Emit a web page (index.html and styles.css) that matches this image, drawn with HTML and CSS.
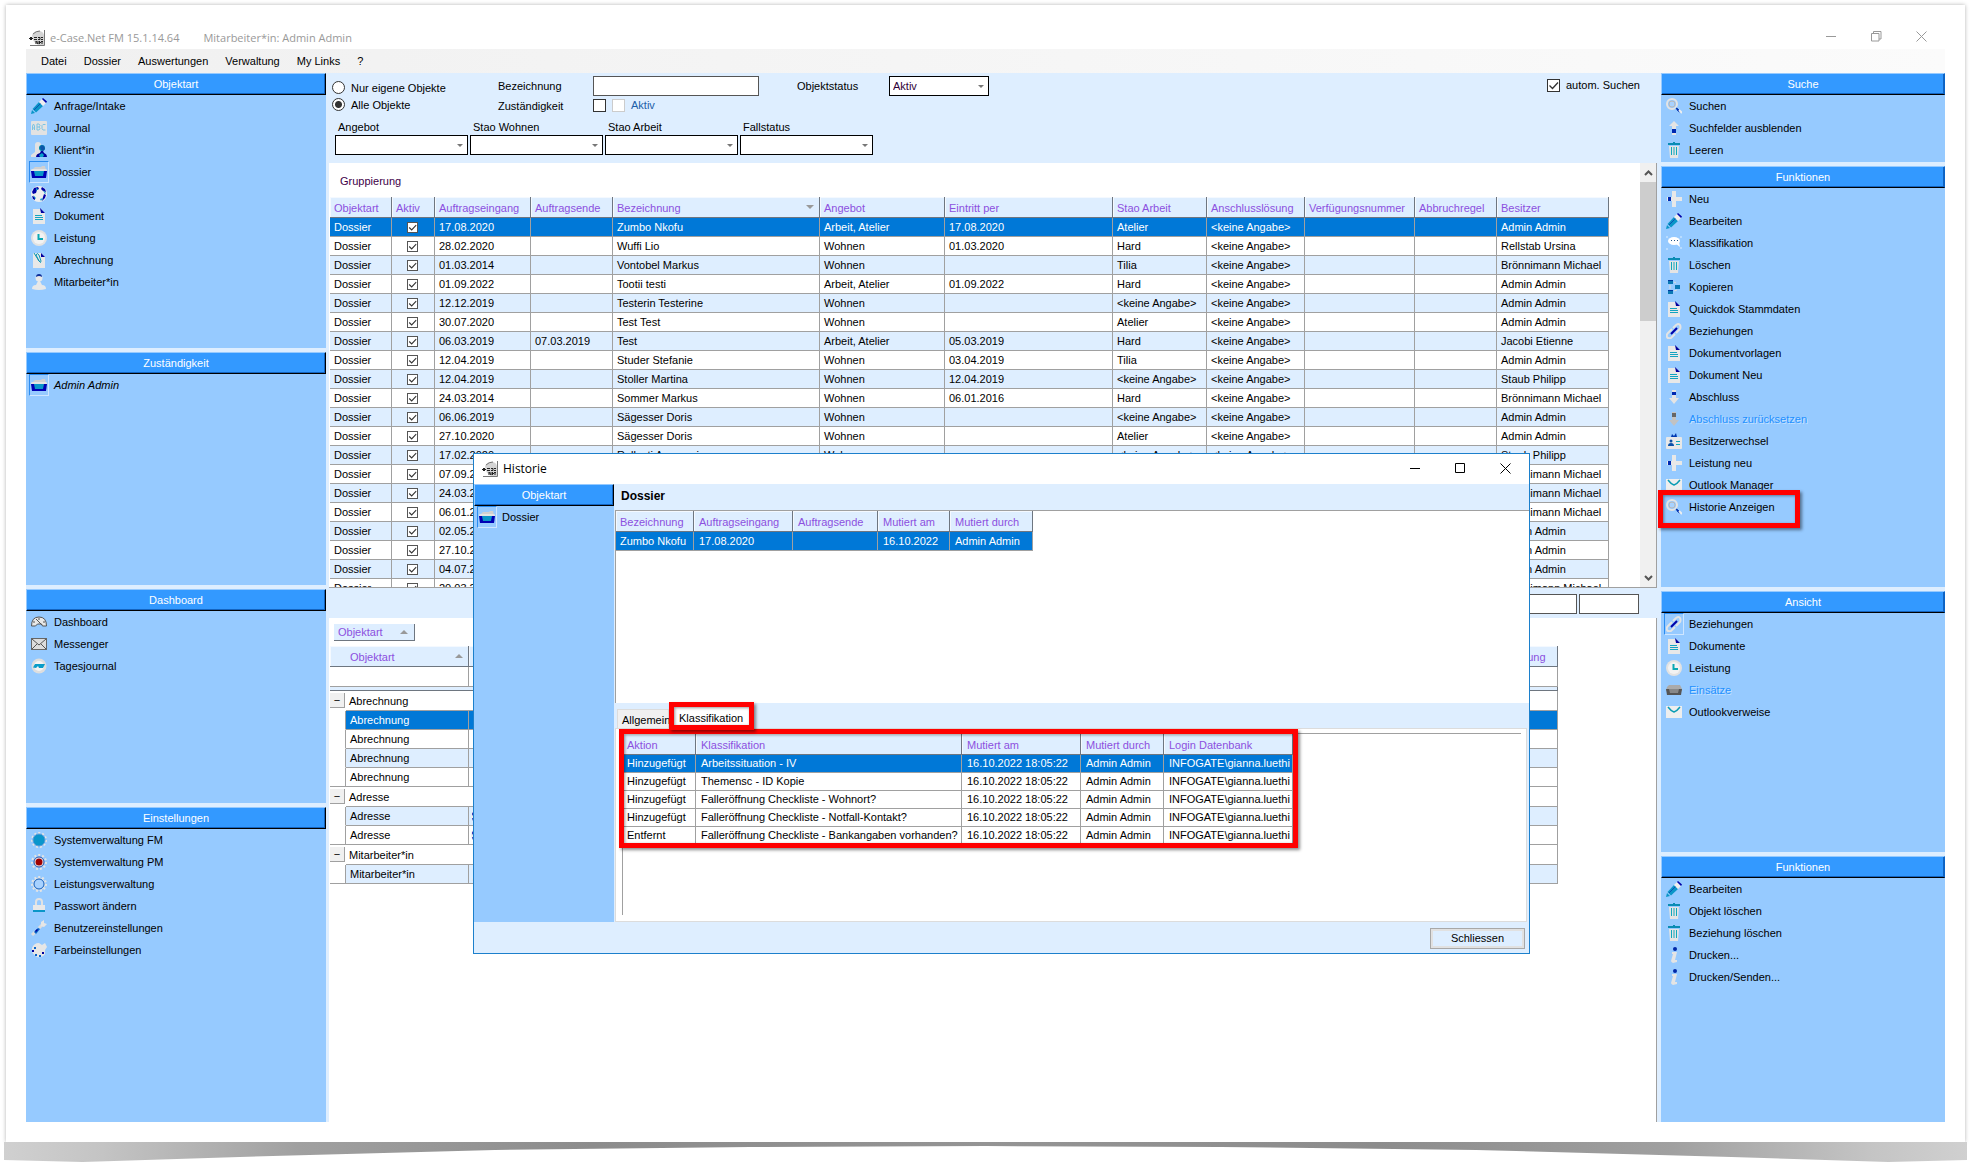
FILE: index.html
```html
<!DOCTYPE html>
<html lang="de">
<head>
<meta charset="utf-8">
<title>e-Case.Net FM</title>
<link rel="stylesheet" href="styles.css">
</head>
<body>
<svg class="sprite" aria-hidden="true">
  <symbol id="logo" viewBox="0 0 16 16"><path d="M3 5Q6 0 11 1q4 1 4 5v9H9Q3 12 3 5z" fill="#d4d4d4"/><path d="M4 4q3-3 7-3" stroke="#777" fill="none"/><path d="M15.500 0v15.500H1" stroke="#777" fill="none"/><path d="M0 8.500h4M1 7.500h2M1 9.500h2M5 7.500h3M5 9.500h3M9 7.500h2v2H9M12 7.500h2M12 9.500h2" stroke="#222" fill="none"/><path d="M7 14v-3l2 3v-3M10.500 11v3M10 12.500h2M13 11v3M12 11.500h2" stroke="#222" fill="none"/></symbol>
  <symbol id="pencil" viewBox="0 0 16 16"><path d="M0 16l1-4 3 3z" fill="#0a96c8"/><path d="M1.500 11L8 4l4 4-7 6.500z" fill="#0a96c8"/><path d="M3 12l7-7" stroke="#0d4fb4"/><path d="M8 4l3-3 4 4-3 3z" fill="#eee"/><path d="M11 1l1-1 4 3.500L15 5z" fill="#0000a8"/></symbol>
  <symbol id="abc" viewBox="0 0 16 16"><rect y="1" width="16" height="14" rx="1" fill="#e2e2e2"/><path d="M1.500 10V6l1-2 1 2v4M1.500 8h2M6 4v6h2l1-1.500L8 7l1-1.500L8 4zM6 7h2M14.500 4.500H12l-1 1v3l1 1.500h2.500" fill="none" stroke="#7cc4e2"/></symbol>
  <symbol id="clients" viewBox="0 0 16 16"><path d="M4 3q0-3 3-3t3 3-1 4v3l3 2v3H0v-2l4-3z" fill="#e2e2e2"/><circle cx="11" cy="6" r="3" fill="#08a"/><path d="M9 5q1-3 4-1l1 3-2 2-2-1z" fill="#0d55aa"/><path d="M5 15q0-3 4-4l1-2h2l1 2q3 1 3 4z" fill="#00009c"/><path d="M8 13l3-2 2 2-1 2H9z" fill="#08a0c8"/></symbol>
  <symbol id="folder" viewBox="0 0 16 16"><path d="M2 5l2-2h6l1-1h3l1 4z" fill="#d0d0d0"/><path d="M0 6q0-1 2-1h12q2 0 2 1v1H0z" fill="#e4e4e4"/><path d="M0 7h16l-1 7H1z" fill="#0000b4"/><path d="M3 7h10l-1 5H4z" fill="#0a96c8"/></symbol>
  <symbol id="folder-off" viewBox="0 0 16 16"><path d="M1 5l2-2h11l2 4v2H0z" fill="#aaa"/><path d="M0 7h16l-1 6H1z" fill="#555"/><path d="M3 7h10l-1 4H4z" fill="#888"/></symbol>
  <symbol id="globe" viewBox="0 0 16 16"><circle cx="8" cy="8" r="8" fill="#eee"/><path d="M3 2l4-1 1 2-2 1-1 3-3 1-1-2zM11 1l3 2 1 3-3-1-2-2zM1 10l3 1v3l-2-1zM13 8l2 1-1 3-3 3 1-4z" fill="#0000a8"/><path d="M5 2l2 1-2 2zM12 4l3 3-1 1zM2 9l3 3-1 1zM9 13l3-1-2 3z" fill="#0aa0c8"/></symbol>
  <symbol id="doc" viewBox="0 0 16 16"><path d="M2 1h8l4 4v11H2z" fill="#e8e8e8"/><path d="M9 0l5 5h-4z" fill="#0000a0"/><path d="M4 7.500h7M4 9.500h8M4 11.500h8" stroke="#12a4c0"/></symbol>
  <symbol id="clock" viewBox="0 0 16 16"><circle cx="8" cy="8" r="8" fill="#e2e2e2"/><circle cx="8" cy="8" r="6" fill="#f2f2f2"/><path d="M7.500 4v5H12" stroke="#0aa8b4" stroke-width="2" fill="none"/></symbol>
  <symbol id="clip" viewBox="0 0 16 16"><path d="M2 1h8l4 4v11H2z" fill="#e8e8e8"/><path d="M10 1l4 4h-4z" fill="#0000a0"/><path d="M3 1l5 8q2 3 2 0L8 3Q6 0 5 3l3 6" stroke="#0a96b4" fill="none"/></symbol>
  <symbol id="person" viewBox="0 0 16 16"><circle cx="8" cy="4" r="3.500" fill="#e8e8e8"/><path d="M5 3q0-3 3-3t3 3q-3-2-6 0z" fill="#0b2f9c"/><path d="M1 15q0-4 4-4l2-4h2l2 4q4 0 4 4-7 2-14 0z" fill="#e8e8e8"/></symbol>
  <symbol id="gauge" viewBox="0 0 16 16"><path d="M.500 12q0-9 7.500-9t7.500 9h-4l-1-2h-4l-2 2z" fill="#e8e8e8" stroke="#555"/><path d="M5 5l6 6M2 8h2M12 8h2M8 4v2" stroke="#555"/></symbol>
  <symbol id="letter" viewBox="0 0 16 16"><rect x=".5" y="2.500" width="15" height="11" fill="#ddd" stroke="#666"/><path d="M1 3l7 6 7-6M1 13l5-5M15 13l-5-5" stroke="#555" fill="none"/></symbol>
  <symbol id="ndp" viewBox="0 0 16 16"><circle cx="8" cy="8" r="7.500" fill="#dedede"/><circle cx="8" cy="8" r="5" fill="#f4f4f4"/><path d="M2 9.500L4 6h10l-2 4H8L7 8l-2 2z" fill="#0a9cc8"/></symbol>
  <symbol id="gear-blue" viewBox="0 0 16 16"><circle cx="8" cy="8" r="7" fill="none" stroke="#e4e4e4" stroke-width="2" stroke-dasharray="2 2"/><circle cx="8" cy="8" r="6" fill="#0a96cc" stroke="#5a9ad8"/></symbol>
  <symbol id="gear-red" viewBox="0 0 16 16"><circle cx="8" cy="8" r="7" fill="none" stroke="#e4e4e4" stroke-width="2" stroke-dasharray="2 2"/><circle cx="8" cy="8" r="5" fill="#eee" stroke="#2c4fa0"/><circle cx="8" cy="8" r="3.500" fill="#a00000"/></symbol>
  <symbol id="gear" viewBox="0 0 16 16"><circle cx="8" cy="8" r="7" fill="none" stroke="#e4e4e4" stroke-width="2" stroke-dasharray="2 2"/><circle cx="8" cy="8" r="6" fill="none" stroke="#e4e4e4"/><circle cx="8" cy="8" r="5" fill="#a8d2ff" stroke="#1a60b8"/></symbol>
  <symbol id="lock" viewBox="0 0 16 16"><path d="M5 8V4q0-3 3-3t3 3v4" fill="none" stroke="#e2e2e2" stroke-width="2"/><path d="M2 7h12v7H2z" fill="#e8e8e8"/><path d="M2 12h12v2H2z" fill="#0a96c8"/></symbol>
  <symbol id="wrench" viewBox="0 0 16 16"><path d="M1 15l3-3M8 8l3-3" stroke="#ddd" stroke-width="3"/><path d="M10 6V2l3-2v3l3 1-3 3z" fill="#e6e6e6"/><path d="M3 12l4-4 2 1-4 5z" fill="#0a64c8"/><path d="M4 11l2-2 1 1-2 2z" fill="#00009c"/></symbol>
  <symbol id="palette" viewBox="0 0 16 16"><path d="M8 1l3 2 3-2 2 4-2 3v4q-3 4-8 3-6-3-5-9 2-5 7-5z" fill="#e6e6e6"/><path d="M3 5h2v2H3zM4 12h2v2H4zM8 13h2v2H8z" fill="#0a64c8"/><path d="M1 8h2v2H1zM11 10h2v2h-2z" fill="#00009c"/></symbol>
  <symbol id="search" viewBox="0 0 16 16"><circle cx="6" cy="6" r="5" fill="none" stroke="#e4e4e4" stroke-width="2"/><circle cx="6" cy="6" r="3" fill="#a8d2ff" stroke="#b8b8b8"/><path d="M10 10l2 1 2 3-2-1z" fill="#0000a8" stroke="#0038b0"/><path d="M13 12l3 3" stroke="#eee" stroke-width="2"/></symbol>
  <symbol id="up" viewBox="0 0 16 16"><path d="M8 1l5 5h-3v9H6V6H3z" fill="#e4e4e4"/><path d="M6 9h4v4H6z" fill="#0028b0"/></symbol>
  <symbol id="down" viewBox="0 0 16 16"><path d="M6 1h4v8h3l-5 6-5-6h3z" fill="#e4e4e4"/><path d="M6 3h4v3H6z" fill="#0028b0"/></symbol>
  <symbol id="down-off" viewBox="0 0 16 16"><path d="M6 1h4v8h3l-5 6-5-6h3z" fill="#c2c2c2"/><path d="M6 2h4v4H6z" fill="#666"/></symbol>
  <symbol id="trash" viewBox="0 0 16 16"><path d="M3 4h10l-1 12H4z" fill="#e4e4e4"/><path d="M2 1h5V0h2v1h5v2H2z" fill="#0a8cb4"/><path d="M5.500 5v8M8 5v8M10.500 5v8" stroke="#10a8bc"/></symbol>
  <symbol id="plus" viewBox="0 0 16 16"><path d="M6 0h4v6h6v4h-6v6H6v-6H1V6h5z" fill="#e8e8e8"/><path d="M2 6h3v4H2z" fill="#0028b0"/></symbol>
  <symbol id="chat" viewBox="0 0 16 16"><path d="M1 1v2M1 13v2M15 1v2M15 12v2" stroke="#dceeff"/><ellipse cx="8" cy="6" rx="6" ry="4" fill="#fff"/><path d="M9 8l5 4-1-5z" fill="#fff"/><path d="M5 5.500h1M8 5.500h1M11 5.500h1" stroke="#258" stroke-width="1"/></symbol>
  <symbol id="copy" viewBox="0 0 16 16"><path d="M2 1h5v4H2zM9 6h5v4H9zM2 11h5v4H2z" fill="#0a78b4"/><path d="M2 1h5v1H2zM2 11h5v1H2z" fill="#0038a0"/><path d="M8 3l2 1M8 12l3-1M4 6v4" stroke="#ddd"/></symbol>
  <symbol id="link" viewBox="0 0 16 16"><path d="M7 5l3-3q3-2 4 0t0 4l-4 4M9 11l-4 4q-3 1-4-1t1-4l4-4" stroke="#e4e4e4" stroke-width="2" fill="none"/><path d="M5 11l6-6" stroke="#0000a8" stroke-width="2"/></symbol>
  <symbol id="idcard" viewBox="0 0 16 16"><rect y="4" width="16" height="12" rx="1" fill="#e8e8e8"/><path d="M5 4l1-3 2 2 2-3 1 4z" fill="#0038b0"/><circle cx="5" cy="8" r="1.500" fill="#0a50a8"/><path d="M2 13q0-3 3-3t3 3z" fill="#0a50a8"/><path d="M10 8.500h4M10 11.500h4" stroke="#10a8bc"/></symbol>
  <symbol id="mail" viewBox="0 0 16 16"><rect y="2" width="16" height="12" fill="#eee"/><path d="M2 3q3 4 6 5 3-1 6-5" stroke="#0a9cb4" fill="none" stroke-width="1.500"/></symbol>
  <symbol id="info" viewBox="0 0 16 16"><circle cx="9" cy="2" r="2" fill="#0028a8"/><path d="M6 5h5l-2 8h2v2l-4 1q-2-1-2-2l2-7H6z" fill="#e4e4e4"/></symbol>
</svg>

<div class="paper">
<div class="app">
  <header class="titlebar">
    <svg class="logo"><use href="#logo"/></svg>
    <span>e-Case.Net FM 15.1.14.64</span><span class="user">Mitarbeiter*in: Admin Admin</span>
    <div class="winbtns muted">
      <button aria-label="Minimieren"><svg viewBox="0 0 11 11"><path d="M0 5.500h10"/></svg></button>
      <button aria-label="Wiederherstellen"><svg viewBox="0 0 11 11"><path d="M.500 2.500h7.500v7.500H.500zM2.500 2.500v-2h7.500v7.500H8"/></svg></button>
      <button aria-label="Schliessen"><svg viewBox="0 0 11 11"><path d="M.500.500l10 10M10.500.500l-10 10"/></svg></button>
    </div>
  </header>
  <nav class="menubar">
    <button>Datei</button><button>Dossier</button><button>Auswertungen</button><button>Verwaltung</button><button>My Links</button><button>?</button>
  </nav>

  <div class="workspace">
    <aside class="side side-left">
      <section class="panel"><h2>Objektart</h2>
        <ul>
          <li><button><svg class="icon"><use href="#pencil"/></svg>Anfrage/Intake</button></li>
          <li><button><svg class="icon"><use href="#abc"/></svg>Journal</button></li>
          <li><button><svg class="icon"><use href="#clients"/></svg>Klient*in</button></li>
          <li><button class="active"><svg class="icon"><use href="#folder"/></svg>Dossier</button></li>
          <li><button><svg class="icon"><use href="#globe"/></svg>Adresse</button></li>
          <li><button><svg class="icon"><use href="#doc"/></svg>Dokument</button></li>
          <li><button><svg class="icon"><use href="#clock"/></svg>Leistung</button></li>
          <li><button><svg class="icon"><use href="#clip"/></svg>Abrechnung</button></li>
          <li><button><svg class="icon"><use href="#person"/></svg>Mitarbeiter*in</button></li>
        </ul>
      </section>
      <section class="panel"><h2>Zuständigkeit</h2>
        <ul><li><button class="active italic"><svg class="icon"><use href="#folder"/></svg>Admin Admin</button></li></ul>
      </section>
      <section class="panel"><h2>Dashboard</h2>
        <ul>
          <li><button><svg class="icon"><use href="#gauge"/></svg>Dashboard</button></li>
          <li><button><svg class="icon"><use href="#letter"/></svg>Messenger</button></li>
          <li><button><svg class="icon"><use href="#ndp"/></svg>Tagesjournal</button></li>
        </ul>
      </section>
      <section class="panel"><h2>Einstellungen</h2>
        <ul>
          <li><button><svg class="icon"><use href="#gear-blue"/></svg>Systemverwaltung FM</button></li>
          <li><button><svg class="icon"><use href="#gear-red"/></svg>Systemverwaltung PM</button></li>
          <li><button><svg class="icon"><use href="#gear"/></svg>Leistungsverwaltung</button></li>
          <li><button><svg class="icon"><use href="#lock"/></svg>Passwort ändern</button></li>
          <li><button><svg class="icon"><use href="#wrench"/></svg>Benutzereinstellungen</button></li>
          <li><button><svg class="icon"><use href="#palette"/></svg>Farbeinstellungen</button></li>
        </ul>
      </section>
    </aside>

    <main class="main">
      <form class="filters">
        <div class="filter-top">
          <div class="scope">
            <label><input type="radio" name="scope">Nur eigene Objekte</label>
            <label><input type="radio" name="scope" checked>Alle Objekte</label>
          </div>
          <div class="fields">
            <label for="bez">Bezeichnung</label><input type="text" id="bez">
            <label for="zust">Zuständigkeit</label>
            <span class="checks"><input type="checkbox" id="zust"><input type="checkbox" id="akt" disabled><label class="dim" for="akt">Aktiv</label></span>
          </div>
          <div class="status"><label for="stat">Objektstatus</label><select id="stat"><option>Aktiv</option></select></div>
          <label class="auto"><input type="checkbox" checked>autom. Suchen</label>
        </div>
        <div class="filter-row">
          <label>Angebot<select><option></option></select></label>
          <label>Stao Wohnen<select><option></option></select></label>
          <label>Stao Arbeit<select><option></option></select></label>
          <label>Fallstatus<select><option></option></select></label>
        </div>
      </form>

      <section class="list">
        <div class="list-body">
          <p class="grouping">Gruppierung</p>
          <table class="grid objects">
            <colgroup><col class="c62"><col class="c43"><col class="c96"><col class="c82"><col class="c207"><col class="c125"><col class="c168"><col class="c94"><col class="c98"><col class="c110"><col class="c82"><col class="c112"></colgroup>
            <thead><tr><th>Objektart</th><th>Aktiv</th><th>Auftragseingang</th><th>Auftragsende</th><th class="sort-down">Bezeichnung</th><th>Angebot</th><th>Eintritt per</th><th>Stao Arbeit</th><th>Anschlusslösung</th><th>Verfügungsnummer</th><th>Abbruchregel</th><th>Besitzer</th></tr></thead>
            <tbody>
              <tr class="selected"><td>Dossier</td><td><input type="checkbox" aria-label="Aktiv" checked></td><td>17.08.2020</td><td></td><td>Zumbo Nkofu</td><td>Arbeit, Atelier</td><td>17.08.2020</td><td>Atelier</td><td>&lt;keine Angabe&gt;</td><td></td><td></td><td>Admin Admin</td></tr>
              <tr><td>Dossier</td><td><input type="checkbox" aria-label="Aktiv" checked></td><td>28.02.2020</td><td></td><td>Wuffi Lio</td><td>Wohnen</td><td>01.03.2020</td><td>Hard</td><td>&lt;keine Angabe&gt;</td><td></td><td></td><td>Rellstab Ursina</td></tr>
              <tr><td>Dossier</td><td><input type="checkbox" aria-label="Aktiv" checked></td><td>01.03.2014</td><td></td><td>Vontobel Markus</td><td>Wohnen</td><td></td><td>Tilia</td><td>&lt;keine Angabe&gt;</td><td></td><td></td><td>Brönnimann Michael</td></tr>
              <tr><td>Dossier</td><td><input type="checkbox" aria-label="Aktiv" checked></td><td>01.09.2022</td><td></td><td>Tootii testi</td><td>Arbeit, Atelier</td><td>01.09.2022</td><td>Hard</td><td>&lt;keine Angabe&gt;</td><td></td><td></td><td>Admin Admin</td></tr>
              <tr><td>Dossier</td><td><input type="checkbox" aria-label="Aktiv" checked></td><td>12.12.2019</td><td></td><td>Testerin Testerine</td><td>Wohnen</td><td></td><td>&lt;keine Angabe&gt;</td><td>&lt;keine Angabe&gt;</td><td></td><td></td><td>Admin Admin</td></tr>
              <tr><td>Dossier</td><td><input type="checkbox" aria-label="Aktiv" checked></td><td>30.07.2020</td><td></td><td>Test Test</td><td>Wohnen</td><td></td><td>Atelier</td><td>&lt;keine Angabe&gt;</td><td></td><td></td><td>Admin Admin</td></tr>
              <tr><td>Dossier</td><td><input type="checkbox" aria-label="Aktiv" checked></td><td>06.03.2019</td><td>07.03.2019</td><td>Test</td><td>Arbeit, Atelier</td><td>05.03.2019</td><td>Hard</td><td>&lt;keine Angabe&gt;</td><td></td><td></td><td>Jacobi Etienne</td></tr>
              <tr><td>Dossier</td><td><input type="checkbox" aria-label="Aktiv" checked></td><td>12.04.2019</td><td></td><td>Studer Stefanie</td><td>Wohnen</td><td>03.04.2019</td><td>Tilia</td><td>&lt;keine Angabe&gt;</td><td></td><td></td><td>Admin Admin</td></tr>
              <tr><td>Dossier</td><td><input type="checkbox" aria-label="Aktiv" checked></td><td>12.04.2019</td><td></td><td>Stoller Martina</td><td>Wohnen</td><td>12.04.2019</td><td>&lt;keine Angabe&gt;</td><td>&lt;keine Angabe&gt;</td><td></td><td></td><td>Staub Philipp</td></tr>
              <tr><td>Dossier</td><td><input type="checkbox" aria-label="Aktiv" checked></td><td>24.03.2014</td><td></td><td>Sommer Markus</td><td>Wohnen</td><td>06.01.2016</td><td>Hard</td><td>&lt;keine Angabe&gt;</td><td></td><td></td><td>Brönnimann Michael</td></tr>
              <tr><td>Dossier</td><td><input type="checkbox" aria-label="Aktiv" checked></td><td>06.06.2019</td><td></td><td>Sägesser Doris</td><td>Wohnen</td><td></td><td>&lt;keine Angabe&gt;</td><td>&lt;keine Angabe&gt;</td><td></td><td></td><td>Admin Admin</td></tr>
              <tr><td>Dossier</td><td><input type="checkbox" aria-label="Aktiv" checked></td><td>27.10.2020</td><td></td><td>Sägesser Doris</td><td>Wohnen</td><td></td><td>Atelier</td><td>&lt;keine Angabe&gt;</td><td></td><td></td><td>Admin Admin</td></tr>
              <tr><td>Dossier</td><td><input type="checkbox" aria-label="Aktiv" checked></td><td>17.02.2020</td><td></td><td>Rellseti Annerosi</td><td>Wohnen</td><td></td><td>&lt;keine Angabe&gt;</td><td>&lt;keine Angabe&gt;</td><td></td><td></td><td>Staub Philipp</td></tr>
              <tr><td>Dossier</td><td><input type="checkbox" aria-label="Aktiv" checked></td><td>07.09.2020</td><td></td><td></td><td></td><td></td><td></td><td></td><td></td><td></td><td>Brönnimann Michael</td></tr>
              <tr><td>Dossier</td><td><input type="checkbox" aria-label="Aktiv" checked></td><td>24.03.2014</td><td></td><td></td><td></td><td></td><td></td><td></td><td></td><td></td><td>Brönnimann Michael</td></tr>
              <tr><td>Dossier</td><td><input type="checkbox" aria-label="Aktiv" checked></td><td>06.01.2014</td><td></td><td></td><td></td><td></td><td></td><td></td><td></td><td></td><td>Brönnimann Michael</td></tr>
              <tr><td>Dossier</td><td><input type="checkbox" aria-label="Aktiv" checked></td><td>02.05.2019</td><td></td><td></td><td></td><td></td><td></td><td></td><td></td><td></td><td>Admin Admin</td></tr>
              <tr><td>Dossier</td><td><input type="checkbox" aria-label="Aktiv" checked></td><td>27.10.2020</td><td></td><td></td><td></td><td></td><td></td><td></td><td></td><td></td><td>Admin Admin</td></tr>
              <tr><td>Dossier</td><td><input type="checkbox" aria-label="Aktiv" checked></td><td>04.07.2019</td><td></td><td></td><td></td><td></td><td></td><td></td><td></td><td></td><td>Admin Admin</td></tr>
              <tr><td>Dossier</td><td><input type="checkbox" aria-label="Aktiv" checked></td><td>20.03.2014</td><td></td><td></td><td></td><td></td><td></td><td></td><td></td><td></td><td>Brönnimann Michael</td></tr>
            </tbody>
          </table>
        </div>
        <div class="scrollbar">
          <button aria-label="Nach oben"><svg viewBox="0 0 9 6"><path d="M1 5l3.500-3.500L8 5"/></svg></button>
          <div class="thumb"></div>
          <button class="end" aria-label="Nach unten"><svg viewBox="0 0 9 6"><path d="M1 1l3.500 3.500L8 1"/></svg></button>
        </div>
      </section>

      <div class="strip"><input type="text" aria-label="Anzahl"><input type="text" aria-label="Total"></div>

      <section class="relations">
        <button class="group-tag">Objektart<i class="tri"></i></button>
        <table class="grid related">
          <colgroup><col class="c16"><col class="c123"><col><col class="c80"></colgroup>
          <thead><tr><th colspan="2" class="sort-up">Objektart</th><th></th><th>Bezeichnung</th></tr></thead>
          <tbody>
            <tr class="search"><td colspan="2"></td><td></td><td></td></tr>
            <tr class="divider"><td colspan="4"></td></tr>
            <tr class="group"><td><button aria-label="Zuklappen">−</button></td><td colspan="3">Abrechnung</td></tr>
            <tr class="selected"><td></td><td>Abrechnung</td><td><svg><use href="#doc"/></svg></td><td></td></tr>
            <tr><td></td><td>Abrechnung</td><td><svg><use href="#doc"/></svg></td><td></td></tr>
            <tr class="alt"><td></td><td>Abrechnung</td><td><svg><use href="#doc"/></svg></td><td></td></tr>
            <tr class="last"><td></td><td>Abrechnung</td><td><svg><use href="#doc"/></svg></td><td></td></tr>
            <tr class="group"><td><button aria-label="Zuklappen">−</button></td><td colspan="3">Adresse</td></tr>
            <tr class="alt"><td></td><td>Adresse</td><td><svg><use href="#globe"/></svg></td><td></td></tr>
            <tr class="last"><td></td><td>Adresse</td><td><svg><use href="#globe"/></svg></td><td></td></tr>
            <tr class="group"><td><button aria-label="Zuklappen">−</button></td><td colspan="3">Mitarbeiter*in</td></tr>
            <tr class="alt last"><td></td><td>Mitarbeiter*in</td><td><svg><use href="#person"/></svg></td><td></td></tr>
          </tbody>
        </table>
      </section>
    </main>

    <aside class="side side-right">
      <section class="panel"><h2>Suche</h2>
        <ul>
          <li><button><svg class="icon"><use href="#search"/></svg>Suchen</button></li>
          <li><button><svg class="icon"><use href="#up"/></svg>Suchfelder ausblenden</button></li>
          <li><button><svg class="icon"><use href="#trash"/></svg>Leeren</button></li>
        </ul>
      </section>
      <section class="panel"><h2>Funktionen</h2>
        <ul>
          <li><button><svg class="icon"><use href="#plus"/></svg>Neu</button></li>
          <li><button><svg class="icon"><use href="#pencil"/></svg>Bearbeiten</button></li>
          <li><button><svg class="icon"><use href="#chat"/></svg>Klassifikation</button></li>
          <li><button><svg class="icon"><use href="#trash"/></svg>Löschen</button></li>
          <li><button><svg class="icon"><use href="#copy"/></svg>Kopieren</button></li>
          <li><button><svg class="icon"><use href="#doc"/></svg>Quickdok Stammdaten</button></li>
          <li><button><svg class="icon"><use href="#link"/></svg>Beziehungen</button></li>
          <li><button><svg class="icon"><use href="#doc"/></svg>Dokumentvorlagen</button></li>
          <li><button><svg class="icon"><use href="#doc"/></svg>Dokument Neu</button></li>
          <li><button><svg class="icon"><use href="#down"/></svg>Abschluss</button></li>
          <li><button disabled><svg class="icon"><use href="#down-off"/></svg>Abschluss zurücksetzen</button></li>
          <li><button><svg class="icon"><use href="#idcard"/></svg>Besitzerwechsel</button></li>
          <li><button><svg class="icon"><use href="#plus"/></svg>Leistung neu</button></li>
          <li><button><svg class="icon"><use href="#mail"/></svg>Outlook Manager</button></li>
          <li class="marked"><button><svg class="icon"><use href="#search"/></svg>Historie Anzeigen</button><span class="frame frame-item"></span></li>
        </ul>
      </section>
      <section class="panel"><h2>Ansicht</h2>
        <ul>
          <li><button class="active"><svg class="icon"><use href="#link"/></svg>Beziehungen</button></li>
          <li><button><svg class="icon"><use href="#doc"/></svg>Dokumente</button></li>
          <li><button><svg class="icon"><use href="#clock"/></svg>Leistung</button></li>
          <li><button disabled><svg class="icon"><use href="#folder-off"/></svg>Einsätze</button></li>
          <li><button><svg class="icon"><use href="#mail"/></svg>Outlookverweise</button></li>
        </ul>
      </section>
      <section class="panel"><h2>Funktionen</h2>
        <ul>
          <li><button><svg class="icon"><use href="#pencil"/></svg>Bearbeiten</button></li>
          <li><button><svg class="icon"><use href="#trash"/></svg>Objekt löschen</button></li>
          <li><button><svg class="icon"><use href="#trash"/></svg>Beziehung löschen</button></li>
          <li><button><svg class="icon"><use href="#info"/></svg>Drucken...</button></li>
          <li><button><svg class="icon"><use href="#info"/></svg>Drucken/Senden...</button></li>
        </ul>
      </section>
    </aside>
  </div>

  <div class="dialog" role="dialog" aria-label="Historie">
    <header class="dialog-title">
      <svg class="logo"><use href="#logo"/></svg><span>Historie</span>
      <div class="winbtns">
        <button aria-label="Minimieren"><svg viewBox="0 0 11 11"><path d="M0 5.500h10"/></svg></button>
        <button aria-label="Maximieren"><svg viewBox="0 0 11 11"><path d="M.500.500h9v9h-9z"/></svg></button>
        <button aria-label="Schliessen"><svg viewBox="0 0 11 11"><path d="M.500.500l10 10M10.500.500l-10 10"/></svg></button>
      </div>
    </header>
    <div class="dialog-body">
      <aside class="panel"><h2>Objektart</h2>
        <ul><li><button class="active"><svg class="icon"><use href="#folder"/></svg>Dossier</button></li></ul>
      </aside>
      <div class="dialog-main">
        <h3>Dossier</h3>
        <div class="entries">
          <table class="grid history">
            <colgroup><col class="c78"><col class="c99"><col class="c85"><col class="c72"><col class="c83"></colgroup>
            <thead><tr><th>Bezeichnung</th><th>Auftragseingang</th><th>Auftragsende</th><th>Mutiert am</th><th>Mutiert durch</th></tr></thead>
            <tbody><tr class="selected"><td>Zumbo Nkofu</td><td>17.08.2020</td><td></td><td>16.10.2022</td><td>Admin Admin</td></tr></tbody>
          </table>
        </div>
        <div class="tabs" role="tablist">
          <button role="tab">Allgemein</button>
          <button role="tab" class="current" aria-selected="true">Klassifikation<span class="frame frame-tab"></span></button>
        </div>
        <div class="pane">
          <div class="pane-grid">
            <table class="grid changes">
              <colgroup><col class="c73"><col class="c266"><col class="c119"><col class="c83"><col class="c129"></colgroup>
              <thead><tr><th>Aktion</th><th>Klassifikation</th><th>Mutiert am</th><th>Mutiert durch</th><th>Login Datenbank</th></tr></thead>
              <tbody>
                <tr class="selected"><td>Hinzugefügt</td><td>Arbeitssituation - IV</td><td>16.10.2022 18:05:22</td><td>Admin Admin</td><td>INFOGATE\gianna.luethi</td></tr>
                <tr><td>Hinzugefügt</td><td>Themensc - ID Kopie</td><td>16.10.2022 18:05:22</td><td>Admin Admin</td><td>INFOGATE\gianna.luethi</td></tr>
                <tr><td>Hinzugefügt</td><td>Falleröffnung Checkliste - Wohnort?</td><td>16.10.2022 18:05:22</td><td>Admin Admin</td><td>INFOGATE\gianna.luethi</td></tr>
                <tr><td>Hinzugefügt</td><td>Falleröffnung Checkliste - Notfall-Kontakt?</td><td>16.10.2022 18:05:22</td><td>Admin Admin</td><td>INFOGATE\gianna.luethi</td></tr>
                <tr><td>Entfernt</td><td>Falleröffnung Checkliste - Bankangaben vorhanden?</td><td>16.10.2022 18:05:22</td><td>Admin Admin</td><td>INFOGATE\gianna.luethi</td></tr>
              </tbody>
            </table>
          </div>
          <span class="frame frame-table"></span>
        </div>
      </div>
    </div>
    <footer class="dialog-foot"><button>Schliessen</button></footer>
  </div>
</div>
</div>
</body>
</html>
```
FILE: styles.css
```css
:root {
  --pale: #deeeff;
  --panel: #96caff;
  --head: #3399ff;
  --select: #0078d7;
  --line: #a0a0a0;
  --violet: #8c50e0;
}
* { box-sizing: border-box; }
body {
  margin: 0;
  padding: 5px 14px 29px 6px;
  min-height: 100vh;
  display: flex;
  flex-direction: column;
  background: #fff;
  color: #000;
  font: 11px/18px "Liberation Sans", Arial, sans-serif;
}
button, input, select { font: inherit; color: inherit; margin: 0; padding: 0; }
button { background: none; border: 0; text-align: left; white-space: nowrap; }
h2, h3, p, ul { margin: 0; padding: 0; font-size: 11px; font-weight: normal; list-style: none; }
.sprite { position: absolute; width: 0; height: 0; }

/* sheet with the curled shadow underneath */
.paper {
  position: relative;
  flex: 1;
  display: flex;
  padding: 21px 20px 20px;
  background: #fff;
  box-shadow: 0 0 4px rgba(0, 0, 0, .3);
}
.paper::before {
  content: "";
  position: absolute;
  left: -2px;
  right: -2px;
  top: 100%;
  height: 21px;
  background: linear-gradient(90deg, #d0d0d0, #c4c4c4 5%, #a0a0a0 15%, #8c8c8c 30%, #949494 50%, #8c8c8c 70%, #a0a0a0 85%, #c4c4c4 95%, #d0d0d0);
  clip-path: polygon(0 0, 100% 0, 100% 18px, 96% 20px, 88% 15px, 75% 8px, 62% 5px, 50% 4px, 38% 5px, 25% 8px, 12% 15px, 4% 20px, 0 18px);
}
.app { position: relative; flex: 1; min-width: 0; display: flex; flex-direction: column; }

/* title and menu */
.titlebar, .dialog-title { display: flex; align-items: center; font: 12px/22px "Open Sans", sans-serif; }
.titlebar { height: 23px; padding-left: 3px; font-size: 11px; color: #999; }
.logo { width: 16px; height: 16px; margin-right: 5px; }
.user { margin-left: 24px; }
.winbtns { display: flex; gap: 34px; margin-left: auto; padding: 0 18px 2px 0; }
.winbtns button { display: flex; }
.winbtns svg { width: 11px; height: 11px; fill: none; stroke: #000; }
.muted svg { stroke: #999; }
.menubar {
  display: flex;
  gap: 17px;
  height: 24px;
  padding-left: 15px;
  background: linear-gradient(90deg, #f0f0f0, #fbfbfb);
}

/* three columns */
.workspace {
  flex: 1;
  display: grid;
  grid-template-columns: 300px minmax(0, 1fr) 284px;
  gap: 3px;
  background: var(--pale);
}
.side { display: grid; gap: 4px; }
.side-left { grid-template-rows: 275px 233px 214px 1fr; }
.side-right { grid-template-rows: 89px 421px 261px 1fr; }
.panel { background: var(--panel); }
.panel h2 {
  height: 22px;
  line-height: 20px;
  text-align: center;
  color: #fff;
  background: var(--head);
  border: 1px solid #000;
  border-top-color: var(--panel);
  border-left-color: var(--panel);
  box-shadow: inset -1px -1px #1464c0;
}
.side-right h2 { border-right-color: #0a64c8; }
.panel li { position: relative; height: 22px; }
.panel li button { display: flex; align-items: center; gap: 5px; width: 100%; height: 22px; padding-left: 3px; }
.icon { width: 20px; height: 22px; padding: 2px 1px; border: 1px solid transparent; }
.active .icon { border-color: #2a8cf0 #cfe6ff #cfe6ff #2a8cf0; }
.italic { font-style: italic; }
.panel button:disabled { color: #1e90ff; text-shadow: 1px 1px #c4e1ff; }

/* filter form */
.main { display: flex; flex-direction: column; min-width: 0; padding-right: 1px; }
.filters { display: flex; flex-direction: column; height: 90px; }
.filter-top { display: flex; height: 46px; padding: 3px 17px 0 3px; }
.scope { width: 166px; padding-top: 3px; }
.scope label { display: flex; align-items: center; gap: 6px; height: 17px; }
.fields { display: grid; grid-template-columns: 95px 166px; grid-template-rows: 20px 18px; width: 299px; }
.status { display: flex; height: 20px; }
.status label { width: 92px; }
.status select { width: 100px; }
.checks { display: flex; align-items: center; gap: 6px; }
.dim { color: #1c5fa8; }
.auto { display: flex; align-items: center; gap: 6px; height: 18px; margin-left: auto; }
.fields label, .status label { line-height: 20px; }
.filter-row { display: flex; gap: 2px; padding-left: 6px; }
.filter-row label { display: flex; flex-direction: column; width: 133px; padding-top: 1px; line-height: 15px; text-indent: 3px; }
input[type="text"], select {
  height: 20px;
  border: 1px solid #555;
  border-radius: 0;
  background: #fff;
}
select {
  appearance: none;
  padding-left: 3px;
  border-color: #000;
  color: #300038;
  background: #fff url("data:image/svg+xml,%3Csvg xmlns='http://www.w3.org/2000/svg' width='6' height='3'%3E%3Cpath d='M0 0h6L3 3z' fill='%23777'/%3E%3C/svg%3E") no-repeat right 4px center;
}
input[type="radio"], input[type="checkbox"] {
  appearance: none;
  flex: none;
  width: 13px;
  height: 13px;
  border: 1px solid #333;
  background: #fff;
}
input[type="radio"] { border-radius: 50%; }
input[type="radio"]:checked { background: radial-gradient(circle, #333 3px, #fff 4px); }
input[type="checkbox"]:checked {
  background: #fff url("data:image/svg+xml,%3Csvg xmlns='http://www.w3.org/2000/svg' viewBox='0 0 11 11'%3E%3Cpath d='M1.500 5.500l3 3L10 2.500' fill='none' stroke='%23333' stroke-width='1.300'/%3E%3C/svg%3E");
}
input[type="checkbox"]:disabled { border-color: #ccc; }

/* data grids */
.grid { table-layout: fixed; border-collapse: separate; border-spacing: 0; }
.grid th, .grid td {
  height: 19px;
  padding: 0 4px;
  overflow: hidden;
  white-space: nowrap;
  text-align: left;
  font-weight: normal;
  line-height: 18px;
  border-right: 1px solid var(--line);
  border-bottom: 1px solid var(--line);
}
.grid th { height: 21px; padding-top: 2px; color: var(--violet); background: var(--pale); border-color: #6e7680; box-shadow: inset 1px 1px #f4f9ff; }
.grid .selected td { background: var(--select); color: #fff; }
.grid .sort-down { background: var(--pale) url("data:image/svg+xml,%3Csvg xmlns='http://www.w3.org/2000/svg' width='8' height='4'%3E%3Cpath d='M0 0h8L4 4z' fill='%23999'/%3E%3C/svg%3E") no-repeat right 5px center; }
.grid .sort-up { padding-left: 20px; background: var(--pale) url("data:image/svg+xml,%3Csvg xmlns='http://www.w3.org/2000/svg' width='8' height='4'%3E%3Cpath d='M0 4h8L4 0z' fill='%23999'/%3E%3C/svg%3E") no-repeat right 5px center; }
.c16 { width: 16px; } .c43 { width: 43px; } .c62 { width: 62px; } .c72 { width: 72px; }
.c73 { width: 73px; } .c78 { width: 78px; } .c80 { width: 80px; } .c82 { width: 82px; }
.c83 { width: 83px; } .c85 { width: 85px; } .c94 { width: 94px; } .c96 { width: 96px; }
.c98 { width: 98px; } .c99 { width: 99px; } .c110 { width: 110px; } .c112 { width: 112px; }
.c119 { width: 119px; } .c123 { width: 123px; } .c125 { width: 125px; } .c129 { width: 129px; }
.c168 { width: 168px; } .c207 { width: 207px; } .c266 { width: 266px; }

.list { display: flex; flex: 0 0 425px; overflow: hidden; background: #fff; border-right: 1px solid var(--line); border-bottom: 1px solid var(--line); }
.list-body { flex: 1; min-width: 0; padding-left: 1px; overflow: hidden; }
.grouping { height: 34px; padding-left: 10px; line-height: 36px; color: #400048; }
.objects { width: 1279px; }
.objects tbody tr:nth-child(odd) { background: var(--pale); }
.objects td:nth-child(2) { padding: 0 1px 0 0; text-align: center; }
.objects input { display: block; width: 11px; height: 11px; margin: 0 auto; border-color: #555; }
.scrollbar { display: flex; flex-direction: column; width: 16px; background: #f0f0f0; }
.scrollbar button { display: grid; place-items: center; height: 19px; }
.scrollbar svg { width: 9px; height: 6px; fill: none; stroke: #555; stroke-width: 2; }
.scrollbar .end { margin-top: auto; }
.thumb { height: 139px; background: #cdcdcd; }

.strip { display: flex; justify-content: flex-end; gap: 2px; height: 30px; padding: 6px 18px 0 0; }
.strip input { width: 60px; }
.strip input:first-child { width: 160px; }
.relations { flex: 1; padding: 6px 0 0 1px; background: #fff; border-right: 1px solid var(--line); }
.group-tag {
  display: flex;
  align-items: center;
  justify-content: space-between;
  width: 81px;
  height: 17px;
  margin: 0 0 5px 4px;
  padding: 0 6px 0 4px;
  color: var(--violet);
  background: var(--pale);
  border-right: 1px solid #6e7680;
  border-bottom: 1px solid #6e7680;
}
.tri { border: 4px solid transparent; border-top: 0; border-bottom-color: #999; }
.related { width: 1228px; }
.related .alt td { background: var(--pale); }
.related td:nth-child(3) { padding: 0 2px; }
.related td svg { display: block; width: 16px; height: 16px; }
.related .search td { height: 20px; }
.related .divider td { height: 4px; padding: 0; line-height: 2px; background: var(--pale); border-color: #6e7680; }
.related tr:not(.search):not(.divider) td:first-child { padding: 0; background: #fff; border-bottom-color: #fff; }
.related tbody tr.last:not(.search):not(.divider) td:first-child { border-bottom-color: var(--line); }
.related .group td { height: 20px; }
.related .group td:first-child { border-right-color: #fff; }
.related .group td:last-child { padding-left: 3px; }
.related .group button { width: 15px; height: 15px; line-height: 13px; text-align: center; background: #f0f0f0; border-right: 1px solid var(--line); border-bottom: 1px solid var(--line); display: block; }

/* history window */
.dialog {
  position: absolute;
  left: 447px;
  top: 427px;
  width: 1057px;
  display: flex;
  flex-direction: column;
  background: var(--pale);
  border: 1px solid #1c80cc;
}
.dialog-title { height: 30px; padding-left: 8px; background: #fff; }
.dialog-body { display: grid; grid-template-columns: 140px minmax(0, 1fr); }
.dialog-main { padding-left: 1px; }
.dialog h3 { height: 26px; padding-left: 6px; font-size: 12px; line-height: 24px; font-weight: bold; }
.entries { height: 193px; background: #fff; border-top: 1px solid var(--line); border-left: 1px solid var(--line); }
.history { width: 417px; }
.grid.history th:not(:first-child), .grid.history td:not(:first-child),
.grid.changes th:not(:first-child), .grid.changes td:not(:first-child) { padding-left: 5px; padding-right: 0; }
.tabs { display: flex; align-items: flex-end; gap: 2px; height: 25px; padding-left: 2px; }
.tabs button { position: relative; height: 19px; width: 52px; padding-left: 4px; line-height: 20px; background: #f0f0f0; border: 1px solid #dcdcdc; border-bottom: 0; }
.tabs .current { width: 80px; height: 22px; padding-left: 7px; background: #fff; }
.pane { position: relative; height: 194px; margin-right: 2px; padding: 4px 5px 6px 6px; background: #fff; border: 1px solid #dcdcdc; }
.pane-grid { height: 100%; border-top: 1px solid var(--line); border-left: 1px solid var(--line); }
.changes { width: 670px; }
.grid.changes td { height: 18px; line-height: 17px; }
.grid.changes th:first-child, .grid.changes td:first-child { padding-left: 4px; }
.dialog-foot { display: flex; justify-content: flex-end; padding: 6px 4px 4px; }
.dialog-foot button { width: 95px; height: 21px; text-align: center; line-height: 17px; border: 1px solid #a8a8a8; box-shadow: inset 0 0 0 2px #e1e1e1; }

/* red highlight frames */
.frame { position: absolute; border: 5px solid #f00; box-shadow: 2px 2px 3px rgba(0, 0, 0, .45), inset 1px 1px 3px rgba(0, 0, 0, .4); pointer-events: none; }
.frame-item { left: -3px; top: -6px; width: 142px; height: 38px; z-index: 1; }
.frame-tab { left: -3px; top: -5px; width: 85px; height: 28px; z-index: 1; }
.frame-table { left: 3px; top: 0; width: 679px; height: 119px; }
```
